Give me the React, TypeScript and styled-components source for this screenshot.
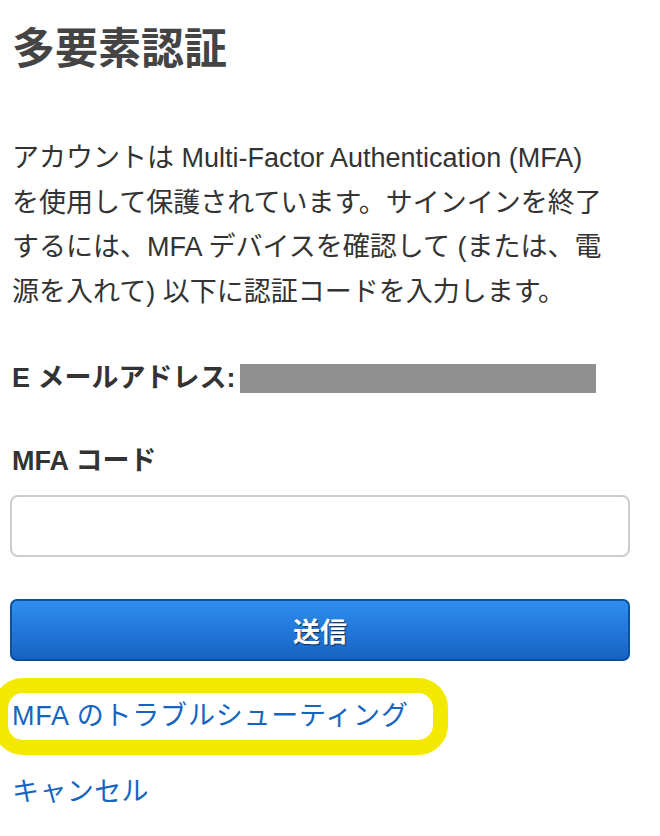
import React, { FC, useState } from 'react';
import styled, { createGlobalStyle } from 'styled-components';

const GlobalStyle = createGlobalStyle`
  body {
    margin: 0;
    background: #fff;
    font-family: 'Liberation Sans', 'Noto Sans CJK JP', sans-serif;
  }
`;

const Page = styled.main`
  display: flex;
  flex-direction: column;
  align-items: flex-start;
  width: 620px;
  padding-left: 10px;
  color: #333;
`;

const Title = styled.h1`
  margin: 24px 0 0 2px;
  font-size: 43px;
  line-height: 50px;
  font-weight: 700;
  color: #444;
`;

const Intro = styled.p`
  margin: 62px 0 0 2px;
  font-size: 27px;
  line-height: 44.5px;
  color: #333;
`;

const EmailRow = styled.div`
  display: flex;
  align-items: center;
  gap: 4px;
  margin: 49px 0 0 2px;
  height: 30px;
`;

const Label = styled.label`
  font-size: 27px;
  line-height: 30px;
  font-weight: 700;
  color: #333;
`;

const Masked = styled.span`
  display: block;
  width: 356px;
  height: 29px;
  background: #8f8f8f;
`;

const FieldLabel = styled(Label)`
  margin: 53px 0 0 2px;
`;

const Input = styled.input`
  box-sizing: border-box;
  width: 620px;
  height: 62px;
  margin-top: 19px;
  border: 2px solid #cdcdcd;
  border-radius: 8px;
  font-size: 27px;
  padding: 0 12px;
  outline: none;
`;

const Submit = styled.button`
  box-sizing: border-box;
  width: 620px;
  height: 62px;
  margin-top: 42px;
  border: 2px solid #0c4f9c;
  border-radius: 7px;
  background: linear-gradient(to bottom, #2e8eee 0%, #2378da 50%, #1763c2 100%);
  color: #fff;
  font-family: 'Noto Sans CJK JP', sans-serif;
  font-size: 27px;
  font-weight: 700;
  text-shadow: 1px 1px 1px rgba(0, 0, 0, 0.6);
  cursor: pointer;
`;

const Highlight = styled.div`
  margin: 17px 0 0 -17px;
  border: 15px solid #f3e800;
  border-radius: 30px;
  padding: 0 24px 0 4px;
`;

const Link = styled.a<{ $gap?: number }>`
  display: block;
  font-size: 27px;
  line-height: 47px;
  color: #1565c0;
  text-decoration: none;
  margin-left: ${(p) => p.$gap ?? 0}px;
`;

const TroubleLink = styled(Link)`
  letter-spacing: 0.8px;
`;

const CancelLink = styled(Link)`
  margin-top: 17px;
  line-height: 40px;
  letter-spacing: 0.4px;
`;

const App: FC = () => {
  const [code, setCode] = useState('');
  return (
    <>
      <GlobalStyle />
      <Page>
        <Title>多要素認証</Title>
        <Intro>
          アカウントは Multi-Factor Authentication (MFA)
          <br />
          を使用して保護されています。サインインを終了
          <br />
          するには、MFA デバイスを確認して (または、電
          <br />
          源を入れて) 以下に認証コードを入力します。
        </Intro>
        <EmailRow>
          <Label>E メールアドレス:</Label>
          <Masked />
        </EmailRow>
        <FieldLabel htmlFor='mfaCode'>MFA コード</FieldLabel>
        <Input id='mfaCode' value={code} onChange={(evt) => setCode(evt.target.value)} />
        <Submit type='button'>送信</Submit>
        <Highlight>
          <TroubleLink href='#'>MFA のトラブルシューティング</TroubleLink>
        </Highlight>
        <CancelLink href='#' $gap={2}>キャンセル</CancelLink>
      </Page>
    </>
  );
};

export default App;
